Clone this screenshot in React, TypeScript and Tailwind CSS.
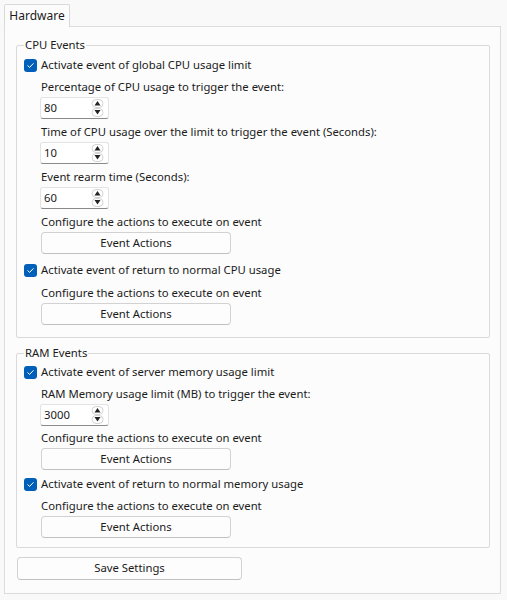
import type { ReactNode } from "react";

function Check() {
  return (
    <span className="inline-flex h-[13px] w-[13px] shrink-0 items-center justify-center rounded-[3px] bg-[#005fb8]">
      <svg width="9" height="9" viewBox="0 0 9 9" fill="none">
        <path d="M1.8 4.7 L3.6 6.4 L7.2 2.6" stroke="white" strokeWidth="1" strokeLinecap="round" strokeLinejoin="round" />
      </svg>
    </span>
  );
}

function CheckRow({ label }: { label: string }) {
  return (
    <div className="flex h-[20px] items-center gap-[4px] pl-[7px]">
      <Check />
      <span>{label}</span>
    </div>
  );
}

function Label({ children, short }: { children: ReactNode; short?: boolean }) {
  return (
    <div className={short ? "flex h-[19px] items-center pl-[24px]" : "flex h-[20px] items-center pl-[24px]"}>
      {children}
    </div>
  );
}

function Spin({ value }: { value: string }) {
  return (
    <div className="ml-[23px] flex h-[22px] w-[69px] items-center justify-between rounded-[3px] border border-[#e3e3e3] border-b-[#8a8a8a] bg-white pl-[3px] pr-[4px]">
      <span>{value}</span>
      <svg width="13" height="20" viewBox="0 0 13 20" fill="none">
        <rect x="1" y="1.5" width="11" height="8" rx="4" stroke="#c8c8c8" strokeWidth="0.8" fill="white" />
        <path d="M6.5 3 L9.5 7.5 L3.5 7.5 Z" fill="#222" />
        <rect x="1" y="10.5" width="11" height="8" rx="4" stroke="#c8c8c8" strokeWidth="0.8" fill="white" />
        <path d="M3.5 12 L9.5 12 L6.5 16.5 Z" fill="#222" />
      </svg>
    </div>
  );
}

function ActionButton({ label = "Event Actions" }: { label?: string }) {
  return (
    <div className="ml-[24px] flex h-[22px] w-[190px] items-center justify-center rounded-[4px] border border-[#d2d2d2] border-b-[#c0c0c0] bg-[#fdfdfd]">
      {label}
    </div>
  );
}

function Group({ title, children, className }: { title: string; children: ReactNode; className: string }) {
  return (
    <fieldset className={"ml-[11px] mr-[10px] rounded-[2px] border border-[#dadada] " + className}>
      <legend className="ml-[7px] px-[1px] leading-[14px]">{title}</legend>
      {children}
    </fieldset>
  );
}

export default function App() {
  return (
    <div
      className="h-[600px] w-[507px] bg-[#f9f9f9] px-[4px] pt-[4px] text-[11.3px] text-[#1b1b1b]"
      style={{ fontFamily: '"Segoe UI", "Noto Sans", sans-serif' }}
    >
      <div className="relative z-10 -mb-px flex h-[23px] w-[66px] items-center justify-center rounded-t-[2px] border border-b-0 border-[#d9d9d9] bg-[#fcfcfc] text-[12px]">
        Hardware
      </div>
      <div className="h-[568px] w-[497px] border border-[#dcdcdc] bg-[#fcfcfc] pt-[11px]">
        <Group title="CPU Events" className="h-[300px]">
          <div className="flex flex-col pt-[3px]">
            <CheckRow label="Activate event of global CPU usage limit" />
            <div className="h-[2px]" />
            <Label>Percentage of CPU usage to trigger the event:</Label>
            <Spin value="80" />
            <div className="h-[3px]" />
            <Label>Time of CPU usage over the limit to trigger the event (Seconds):</Label>
            <Spin value="10" />
            <div className="h-[3px]" />
            <Label>Event rearm time (Seconds):</Label>
            <Spin value="60" />
            <div className="h-[4px]" />
            <Label short>Configure the actions to execute on event</Label>
            <ActionButton />
            <div className="h-[6px]" />
            <CheckRow label="Activate event of return to normal CPU usage" />
            <div className="h-[3px]" />
            <Label>Configure the actions to execute on event</Label>
            <ActionButton />
          </div>
        </Group>
        <div className="h-[8px]" />
        <Group title="RAM Events" className="h-[202px]">
          <div className="flex flex-col pt-[2px]">
            <CheckRow label="Activate event of server memory usage limit" />
            <div className="h-[2px]" />
            <Label>RAM Memory usage limit (MB) to trigger the event:</Label>
            <Spin value="3000" />
            <div className="h-[2px]" />
            <Label>Configure the actions to execute on event</Label>
            <ActionButton />
            <div className="h-[4px]" />
            <CheckRow label="Activate event of return to normal memory usage" />
            <div className="h-[2px]" />
            <Label>Configure the actions to execute on event</Label>
            <ActionButton />
          </div>
        </Group>
        <div className="h-[9px]" />
        <div className="ml-[12px] flex h-[23px] w-[225px] items-center justify-center rounded-[4px] border border-[#d2d2d2] border-b-[#c0c0c0] bg-[#fdfdfd]">
          Save Settings
        </div>
      </div>
    </div>
  );
}
